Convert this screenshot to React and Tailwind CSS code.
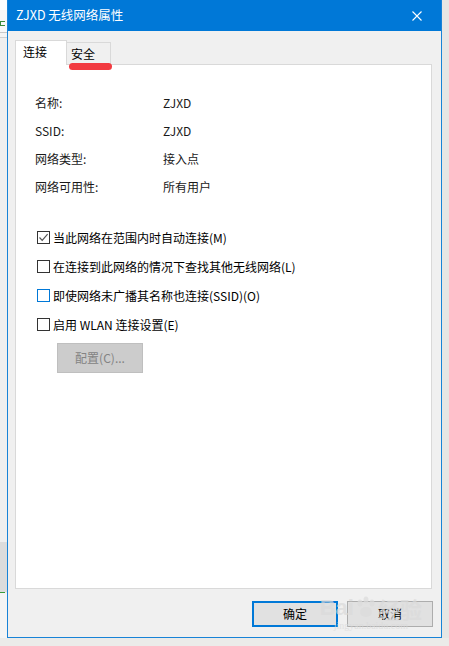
import React from 'react';

const font = { fontFamily: '"Noto Sans CJK SC", "Noto Sans", sans-serif' };

const infoRows = [
    ['名称:', 'ZJXD'],
    ['SSID:', 'ZJXD'],
    ['网络类型:', '接入点'],
    ['网络可用性:', '所有用户'],
];

const options = [
    { label: '当此网络在范围内时自动连接(M)', checked: true },
    { label: '在连接到此网络的情况下查找其他无线网络(L)' },
    { label: '即使网络未广播其名称也连接(SSID)(O)', focus: true },
    { label: '启用 WLAN 连接设置(E)' },
];

function Checkbox({ checked, focus }) {
    return (
        <span
            className={`w-[13px] h-[13px] shrink-0 border bg-white flex items-center justify-center ${
                focus ? 'border-[#0078d7]' : 'border-[#333333]'
            }`}
        >
            {checked && (
                <svg width="11" height="11" viewBox="0 0 11 11">
                    <path d="M1.5 5.5 L4.2 8.3 L9.6 2.2" fill="none" stroke="#555" strokeWidth="1.2" />
                </svg>
            )}
        </span>
    );
}

export default function App() {
    return (
        <div className="w-[449px] h-[646px] bg-[#e9e9e7] flex flex-col overflow-hidden text-[12px] text-black" style={font}>
            <div className="flex h-[638px]">
                {/* background app strip */}
                <div className="w-[7px] flex flex-col bg-[#ececec]">
                    <div className="h-[10px] bg-white" />
                    <div className="h-[22px] bg-[#f7f7f7] flex items-end pb-[6px]">
                        <div className="w-[5px] h-[5px] border border-[#3a8a3a] border-r-0" />
                    </div>
                    <div className="h-px bg-[#c8c8c8]" />
                    <div className="h-[4px] bg-[#f4f4f4]" />
                    <div className="h-px bg-[#d0d0d0]" />
                    <div className="flex-1 bg-[#efefef]" />
                    <div className="h-[50px] bg-[#dcdcdc]" />
                    <div className="h-px bg-[#3a9a3a] w-[5px]" />
                    <div className="h-[45px] bg-[#f4f4f4]" />
                </div>

                {/* dialog */}
                <div className="w-[435px] flex flex-col border-x border-b border-[#1883d7] bg-[#f0f0f0]">
                    <div className="h-[31px] bg-[#0078d7] flex items-center justify-between pl-[8px] pr-[19px] text-white text-[12.5px]">
                        <span>ZJXD 无线网络属性</span>
                        <svg width="10" height="10" viewBox="0 0 10 10">
                            <path d="M0.5 0.5 L9.5 9.5 M9.5 0.5 L0.5 9.5" stroke="white" strokeWidth="1.1" />
                        </svg>
                    </div>

                    <div className="flex-1 flex flex-col pl-[7px] pr-[9px] pt-[9px]">
                        {/* tabs */}
                        <div className="flex items-end h-[24px] relative z-10">
                            <div className="w-[52px] h-[25px] bg-white border border-b-0 border-[#d9d9d9] pl-[7px] pt-[2px] mb-[-1px]">
                                连接
                            </div>
                            <div className="relative w-[44px] h-[22px] bg-[#f0f0f0] border border-l-0 border-b-0 border-[#d9d9d9] pl-[4px] pt-[2px]">
                                安全
                                <span className="absolute left-[2px] top-[20px] w-[43px] h-[7px] rounded-full bg-[#f23a40]" />
                            </div>
                        </div>

                        {/* panel */}
                        <div className="h-[525px] bg-white border border-[#d9d9d9] pl-[19px] pt-[24px]">
                            <div className="flex flex-col">
                                {infoRows.map(([k, v]) => (
                                    <div key={k} className="h-[28px] flex items-center text-[#1a1a1a]">
                                        <span className="w-[128px]">{k}</span>
                                        <span>{v}</span>
                                    </div>
                                ))}
                            </div>

                            <div className="flex flex-col mt-[22px] pl-[2px]">
                                {options.map((o) => (
                                    <div key={o.label} className="h-[29px] flex items-center gap-[3px]">
                                        <Checkbox checked={o.checked} focus={o.focus} />
                                        <span>{o.label}</span>
                                    </div>
                                ))}
                            </div>

                            <button className="mt-[4px] ml-[22px] w-[86px] h-[30px] bg-[#cccccc] border border-[#bfbfbf] text-[#838383] text-[12px]">
                                配置(C)...
                            </button>
                        </div>

                        {/* footer buttons */}
                        <div className="flex justify-end gap-[9px] mt-[12px] relative">
                            <button className="w-[86px] h-[26px] bg-[#e1e1e1] border-2 border-[#0078d7] text-[12px]">
                                确定
                            </button>
                            <button className="w-[86px] h-[26px] bg-[#e1e1e1] border border-[#adadad] text-[12px] mr-[-1px]">
                                取消
                            </button>

                            {/* watermark */}
                            <div className="absolute right-[10px] top-[-6px] flex flex-col items-center pointer-events-none text-[#dadada] opacity-70">
                                <div className="flex items-end gap-[1px] text-[22px] leading-none font-bold" style={{ fontFamily: '"Liberation Sans", sans-serif' }}>
                                    <span>Bai</span>
                                    <svg width="22" height="24" viewBox="0 0 22 24">
                                        <g fill="#dcdcdc">
                                            <ellipse cx="5" cy="8" rx="2.5" ry="3.5" />
                                            <ellipse cx="11" cy="5" rx="2.5" ry="3.5" />
                                            <ellipse cx="17" cy="8" rx="2.5" ry="3.5" />
                                            <ellipse cx="11" cy="17" rx="6" ry="5" />
                                        </g>
                                    </svg>
                                    <span style={font}>经验</span>
                                </div>
                                <span className="text-[10px] leading-none mt-[2px]" style={{ fontFamily: '"Liberation Serif", serif' }}>
                                    jingyan.baidu.com
                                </span>
                            </div>
                        </div>
                    </div>
                </div>

                <div className="w-[7px] bg-[#e6e6e4]" />
            </div>
            <div className="h-[8px] bg-[#ebebe9]" />
        </div>
    );
}
